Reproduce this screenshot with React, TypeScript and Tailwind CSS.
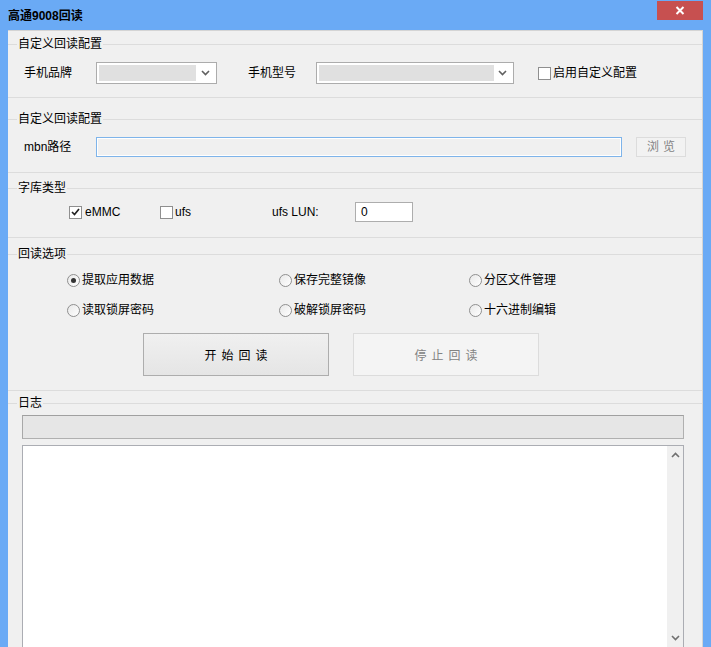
import React from "react";

const font = { fontFamily: '"Liberation Sans", "Noto Sans CJK SC", sans-serif' };

function GroupHeader({ label }: { label: string }) {
  return (
    <div className="flex items-center h-[16px]">
      <div className="w-[9px] h-px bg-[#dcdcdc]" />
      <span className="px-px text-[12px] leading-[16px] text-black">{label}</span>
      <div className="flex-1 h-px bg-[#dcdcdc]" />
    </div>
  );
}

function Combo({ w, inner }: { w: string; inner: string }) {
  return (
    <div className={`${w} h-[22px] border border-[#acacac] bg-white flex items-center p-[2px]`}>
      <div className={`${inner} h-full bg-[#e0e0e0]`} />
      <div className="flex-1 flex items-center justify-center">
        <svg width="9" height="6" viewBox="0 0 9 6">
          <path d="M1 1 L4.5 4.5 L8 1" stroke="#606060" strokeWidth="1.6" fill="none" />
        </svg>
      </div>
    </div>
  );
}

function Check({ checked }: { checked?: boolean }) {
  return (
    <div className="w-[13px] h-[13px] border border-[#8f8f8f] bg-white flex items-center justify-center shrink-0">
      {checked && (
        <svg width="9" height="8" viewBox="0 0 9 8">
          <path d="M1 4 L3.5 6.5 L8 1" stroke="#222" strokeWidth="1.7" fill="none" />
        </svg>
      )}
    </div>
  );
}

function Radio({ checked }: { checked?: boolean }) {
  return (
    <div className="w-[13px] h-[13px] rounded-full border border-[#8f8f8f] bg-gradient-to-br from-[#e8e8e8] to-white flex items-center justify-center shrink-0">
      {checked && <div className="w-[5px] h-[5px] rounded-full bg-[#333]" />}
    </div>
  );
}

export default function App() {
  return (
    <div className="w-[711px] h-[647px] bg-[#6aaaf5] flex flex-col overflow-hidden" style={font}>
      <div className="h-[30px] flex items-start justify-between shrink-0">
        <span className="ml-[8px] mt-[8px] text-[12px] leading-[16px] font-bold text-black">高通9008回读</span>
        <div className="mt-px mr-[8px] w-[46px] h-[19px] bg-[#c75050] flex items-center justify-center">
          <svg width="10" height="9" viewBox="0 0 10 9">
            <path d="M1.5 1 L8.5 8 M8.5 1 L1.5 8" stroke="white" strokeWidth="2" fill="none" />
          </svg>
        </div>
      </div>
      <div className="flex-1 mx-[8px] bg-[#f0f0f0] border-t border-r border-[#d4d4d4] flex flex-col text-[12px] text-black">
        {/* Group 1 */}
        <div className="pt-[5px] pb-[13px] border-b border-[#dcdcdc]">
          <GroupHeader label="自定义回读配置" />
          <div className="mt-[10px] flex items-center pl-[16px] h-[22px]">
            <span className="w-[72px] text-[12px]">手机品牌</span>
            <Combo w="w-[121px]" inner="w-[97px]" />
            <span className="ml-[31px] w-[68px] text-[12px]">手机型号</span>
            <Combo w="w-[198px]" inner="w-[175px]" />
            <div className="ml-[24px] flex items-center">
              <Check />
              <span className="ml-[2px]">启用自定义配置</span>
            </div>
          </div>
        </div>
        {/* Group 2 */}
        <div className="pt-[13px] pb-[15px] border-b border-[#dcdcdc]">
          <GroupHeader label="自定义回读配置" />
          <div className="mt-[10px] flex items-center pl-[16px] h-[20px]">
            <span className="w-[72px] text-[12px]">mbn路径</span>
            <div className="w-[526px] h-[20px] border border-[#7eb4ea] bg-[#f0f0f0] shadow-[inset_0_0_0_1px_#ffffff]" />
            <div className="ml-[14px] w-[50px] h-[20px] border border-[#dcdcdc] bg-[#f2f2f2] flex items-center justify-center text-[#838383] tracking-[4px] pl-[4px]">
              浏览
            </div>
          </div>
        </div>
        {/* Group 3 */}
        <div className="pt-[7px] pb-[15px] border-b border-[#dcdcdc]">
          <GroupHeader label="字库类型" />
          <div className="mt-[6px] flex items-center h-[20px]">
            <div className="ml-[61px] w-[91px] flex items-center">
              <Check checked />
              <span className="ml-[3px]">eMMC</span>
            </div>
            <div className="w-[112px] flex items-center">
              <Check />
              <span className="ml-[2px]">ufs</span>
            </div>
            <span className="w-[83px]">ufs LUN:</span>
            <div className="w-[58px] h-[20px] border border-[#adadad] bg-white flex items-center pl-[5px]">0</div>
          </div>
        </div>
        {/* Group 4 */}
        <div className="pt-[8px] pb-[14px] border-b border-[#dcdcdc]">
          <GroupHeader label="回读选项" />
          <div className="mt-[10px] flex items-center h-[16px]">
            <div className="ml-[59px] w-[212px] flex items-center">
              <Radio checked />
              <span className="ml-[2px]">提取应用数据</span>
            </div>
            <div className="w-[190px] flex items-center">
              <Radio />
              <span className="ml-[2px]">保存完整镜像</span>
            </div>
            <div className="flex items-center">
              <Radio />
              <span className="ml-[2px]">分区文件管理</span>
            </div>
          </div>
          <div className="mt-[14px] flex items-center h-[16px]">
            <div className="ml-[59px] w-[212px] flex items-center">
              <Radio />
              <span className="ml-[2px]">读取锁屏密码</span>
            </div>
            <div className="w-[190px] flex items-center">
              <Radio />
              <span className="ml-[2px]">破解锁屏密码</span>
            </div>
            <div className="flex items-center">
              <Radio />
              <span className="ml-[2px]">十六进制编辑</span>
            </div>
          </div>
          <div className="mt-[15px] flex h-[43px]">
            <div className="ml-[135px] w-[186px] h-full border border-[#adadad] bg-gradient-to-b from-[#f0f0f0] to-[#e5e5e5] flex items-center justify-center tracking-[5px] pl-[5px] pt-[2px]">
              开始回读
            </div>
            <div className="ml-[24px] w-[186px] h-full border border-[#dcdcdc] bg-[#f4f4f4] flex items-center justify-center tracking-[5px] pl-[5px] pt-[2px] text-[#838383]">
              停止回读
            </div>
          </div>
        </div>
        {/* Group 5 */}
        <div className="pt-[4px] flex-1 flex flex-col min-h-0">
          <GroupHeader label="日志" />
          <div className="mt-[4px] ml-[14px] mr-[18px] h-[24px] border border-[#b0b0b0] border-t-[#a0a0a0] border-l-[#a8a8a8] bg-[#e6e6e6]" />
          <div className="mt-[6px] ml-[14px] mr-[18px] flex-1 border border-[#abadb3] border-b-0 bg-white flex justify-end">
            <div className="w-[16px] bg-[#f0f0f0] flex flex-col items-center justify-between py-[6px]">
              <svg width="9" height="6" viewBox="0 0 9 6">
                <path d="M1 5 L4.5 1.5 L8 5" stroke="#707070" strokeWidth="1.6" fill="none" />
              </svg>
              <svg width="9" height="6" viewBox="0 0 9 6">
                <path d="M1 1 L4.5 4.5 L8 1" stroke="#707070" strokeWidth="1.6" fill="none" />
              </svg>
            </div>
          </div>
        </div>
      </div>
    </div>
  );
}
